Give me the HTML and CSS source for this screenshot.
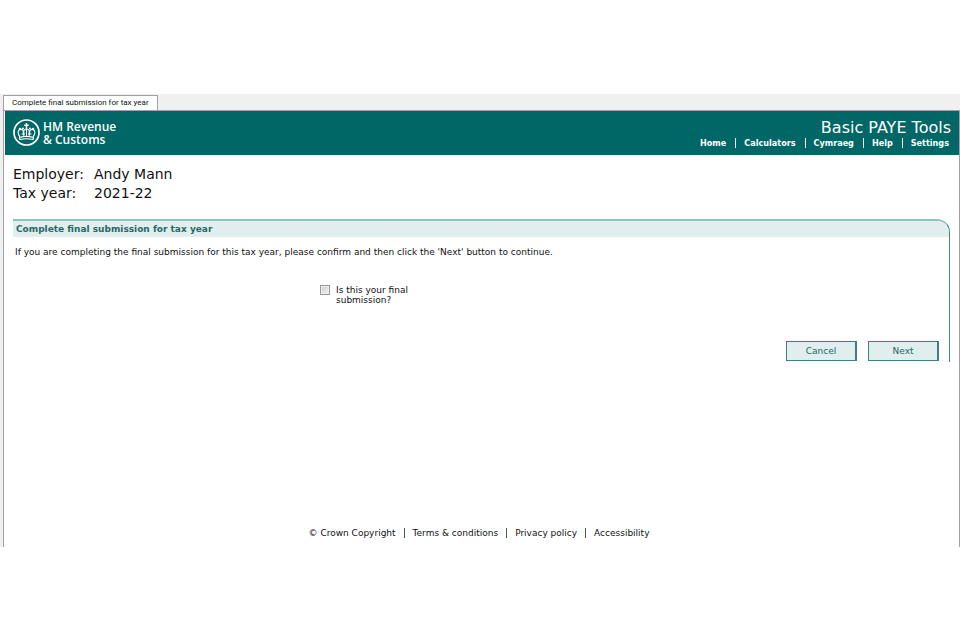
FILE: index.html
```html
<!DOCTYPE html>
<html lang="en">
<head>
<meta charset="utf-8">
<title>Basic PAYE Tools</title>
<link rel="stylesheet" href="styles.css">
</head>
<body>
<div class="window">
  <div class="tabs"><button type="button" class="tab">Complete final submission for tax year</button></div>
  <div class="page">
    <header class="banner">
      <div class="brand">
        <svg class="crest" viewBox="0 0 54 54" fill="none" stroke="#fff" aria-hidden="true">
          <circle cx="27" cy="27" r="25" stroke-width="3.4"/>
          <g stroke-width="2.2">
            <path d="M14 36C9 29 9 22 14 21c5-1 8 3 8 8M40 36c5-7 5-14 0-15-5-1-8 3-8 8"/>
            <path d="M22 34c-3-7-2-12 5-15 7 3 8 8 5 15M27 18v16M13 37c9-3 19-3 28 0l-1 4c-8-2-18-2-26 0z"/>
            <path d="M17 30h7M30 30h7"/>
          </g>
          <g fill="#fff" stroke="none">
            <path d="M25.500 8h3v3h3v3h-3v4h-3v-4h-3v-3h3z"/>
            <circle cx="14" cy="20" r="2.500"/><circle cx="40" cy="20" r="2.500"/>
            <circle cx="20" cy="19" r="2"/><circle cx="34" cy="19" r="2"/>
          </g>
        </svg>
        <div class="brand-name"><div>HM Revenue</div><div>&amp; Customs</div></div>
      </div>
      <div class="tools">
        <h1 class="product">Basic PAYE Tools</h1>
        <nav class="links nav">
          <a href="#">Home</a><a href="#">Calculators</a><a href="#">Cymraeg</a><a href="#">Help</a><a href="#">Settings</a>
        </nav>
      </div>
    </header>
    <main class="content">
      <dl class="details">
        <dt>Employer:</dt><dd>Andy Mann</dd>
        <dt>Tax year:</dt><dd>2021-22</dd>
      </dl>
      <form class="panel">
        <h2 class="panel-title">Complete final submission for tax year</h2>
        <p class="intro">If you are completing the final submission for this tax year, please confirm and then click the 'Next' button to continue.</p>
        <div class="confirm">
          <input type="checkbox" id="final" class="check">
          <label for="final">Is this your final submission?</label>
        </div>
        <div class="actions">
          <button type="button" class="button">Cancel</button>
          <button type="button" class="button">Next</button>
        </div>
      </form>
    </main>
    <footer class="links footer">
      <span>© Crown Copyright</span><a href="#">Terms &amp; conditions</a><a href="#">Privacy policy</a><a href="#">Accessibility</a>
    </footer>
  </div>
</div>
</body>
</html>
```
FILE: styles.css
```css
* { box-sizing: border-box; }
body {
  margin: 0;
  padding: 94px 0;
  background: #fff;
  color: #111;
  font-family: Verdana, "DejaVu Sans", sans-serif;
  font-size: 9px;
  line-height: 10px;
}
a { color: inherit; text-decoration: none; }
.window { background: #f0f0f0; padding-left: 3px; }
.tabs { display: flex; padding-top: 1px; }
.tab {
  height: 15px;
  padding: 0 8px;
  border: 1px solid #a0a0a5;
  border-bottom: 0;
  background: #fff;
  color: #111;
  font: 8px/14px Tahoma, Roboto, sans-serif;
}
.page {
  border: 1px solid #a0a0ac;
  border-bottom: 0;
  background: #fff;
  padding: 0 0 9px 1px;
}
.banner {
  display: flex;
  justify-content: space-between;
  background: #006666;
  color: #fff;
  height: 44px;
  padding: 7px 8px 0;
}
.brand { display: flex; gap: 3px; }
.crest { width: 27px; height: 27px; margin-top: 1px; }
.brand-name {
  font: 600 12px/13px "Open Sans", sans-serif;
  padding-top: 2px;
}
.tools { display: flex; flex-direction: column; align-items: flex-end; }
.product { margin: 0; font-size: 16px; line-height: 20px; font-weight: 400; }
.links { display: flex; }
.links > * { padding: 0 8px; line-height: 10px; }
.links > * + * { border-left: 1px solid currentColor; }
.nav { font-family: "DejaVu Sans Condensed", sans-serif; font-weight: 700; }
.nav > * { padding: 0 9px 0 8px; }
.nav > :last-child { padding-right: 2px; }
.content { padding: 10px 9px 0 8px; }
.details {
  display: grid;
  grid-template-columns: 81px 1fr;
  margin: 0 0 16px;
  font-size: 14px;
  line-height: 19px;
}
.details dd { margin: 0; }
.panel {
  border-top: 2px solid #8fc0c0;
  border-right: 1px solid #408888;
  border-top-right-radius: 13px;
}
.panel-title {
  margin: 0;
  padding: 0 3px;
  background: #e0eeee;
  border-top-right-radius: 12px;
  color: #2a6666;
  font-size: 9px;
  line-height: 16px;
}
.intro { margin: 10px 2px 28px; }
.confirm { display: flex; gap: 6px; padding-left: 307px; }
.confirm label { width: 90px; }
.check {
  appearance: none;
  width: 10px;
  height: 10px;
  margin: 0;
  border: 1px solid #999;
  background: linear-gradient(135deg, #ccc, #f4f4f4);
  box-shadow: inset 0 0 0 1px #eee;
}
.actions { display: flex; justify-content: flex-end; gap: 11px; padding: 36px 10px 1px; }
.button {
  width: 71px;
  height: 20px;
  padding: 0;
  border: 1px solid #3d8080;
  border-right-width: 2px;
  background: #e0eeee;
  color: #1d6666;
  font: inherit;
}
.footer { justify-content: center; margin-top: 166px; padding-right: 6px; }
.footer > * + * { border-color: #555; }
```
